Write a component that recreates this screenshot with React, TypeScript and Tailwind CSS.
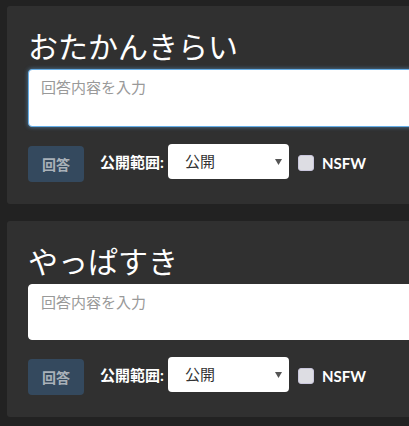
import { useState } from 'react';

type Question = {
  id: number;
  title: string;
  focused?: boolean;
};

const questions: Question[] = [
  { id: 1, title: 'おたかんきらい', focused: true },
  { id: 2, title: 'やっぱすき' },
];

function AnswerCard({ question }: { question: Question }) {
  const [body, setBody] = useState('');
  const [scope, setScope] = useState('public');
  const [nsfw, setNsfw] = useState(false);

  return (
    <div className="w-[520px] rounded-[3px] bg-[#303030] pb-[22px] pl-[21px] pt-[20px]">
      <h2 className="text-[30px] leading-[40px] font-normal text-white">{question.title}</h2>
      <textarea
        value={body}
        onChange={(e) => setBody(e.target.value)}
        placeholder="回答内容を入力"
        className={
          question.focused
            ? 'mt-[3px] block h-[58px] w-[480px] resize-none rounded-[4px] border border-[#66afe9] bg-white px-[12px] py-[5px] text-[15px] leading-[24px] text-[#333] outline-none shadow-[0_0_4px_rgba(102,175,233,0.6)] placeholder:text-[#999]'
            : 'mt-[3px] block h-[56px] w-[480px] resize-none rounded-[4px] border border-white bg-white px-[12px] py-[5px] text-[15px] leading-[24px] text-[#333] outline-none placeholder:text-[#999]'
        }
      />
      <div className="mt-[17px] flex items-start">
        <button className="mt-[2px] h-[36px] w-[56px] rounded-[4px] bg-[#34495e] text-[14px] font-bold text-[#a9b1b9]">
          回答
        </button>
        <span className="ml-[16px] mt-[8px] text-[15px] font-bold leading-[20px] text-white">公開範囲:</span>
        <div className="relative ml-[4px]">
          <select
            value={scope}
            onChange={(e) => setScope(e.target.value)}
            className="block h-[35px] w-[121px] appearance-none rounded-[4px] bg-white pl-[17px] text-[15px] font-normal text-[#333] outline-none"
          >
            <option value="public">公開</option>
            <option value="followers">フォロワー</option>
            <option value="private">非公開</option>
          </select>
          <svg
            className="pointer-events-none absolute right-[7px] top-[15px]"
            width="7"
            height="6"
            viewBox="0 0 7 6"
          >
            <path d="M0 0 H7 L3.5 6 Z" fill="#555" />
          </svg>
        </div>
        <label className="ml-[9px] mt-[11px] flex items-center">
          <input
            type="checkbox"
            checked={nsfw}
            onChange={(e) => setNsfw(e.target.checked)}
            className="h-[16px] w-[16px] appearance-none rounded-[3px] border border-[#c9c6dc] bg-[#dddde3]"
          />
          <span className="ml-[8px] text-[15px] font-bold leading-[16px] text-white">NSFW</span>
        </label>
      </div>
    </div>
  );
}

export default function App() {
  return (
    <div
      className="h-[426px] w-[409px] overflow-hidden bg-[#222222] pl-[7px] pt-[6px]"
      style={{ fontFamily: 'Lato, "Noto Sans CJK JP", sans-serif' }}
    >
      <div className="flex flex-col gap-[17px]">
        {questions.map((q) => (
          <AnswerCard key={q.id} question={q} />
        ))}
      </div>
    </div>
  );
}
